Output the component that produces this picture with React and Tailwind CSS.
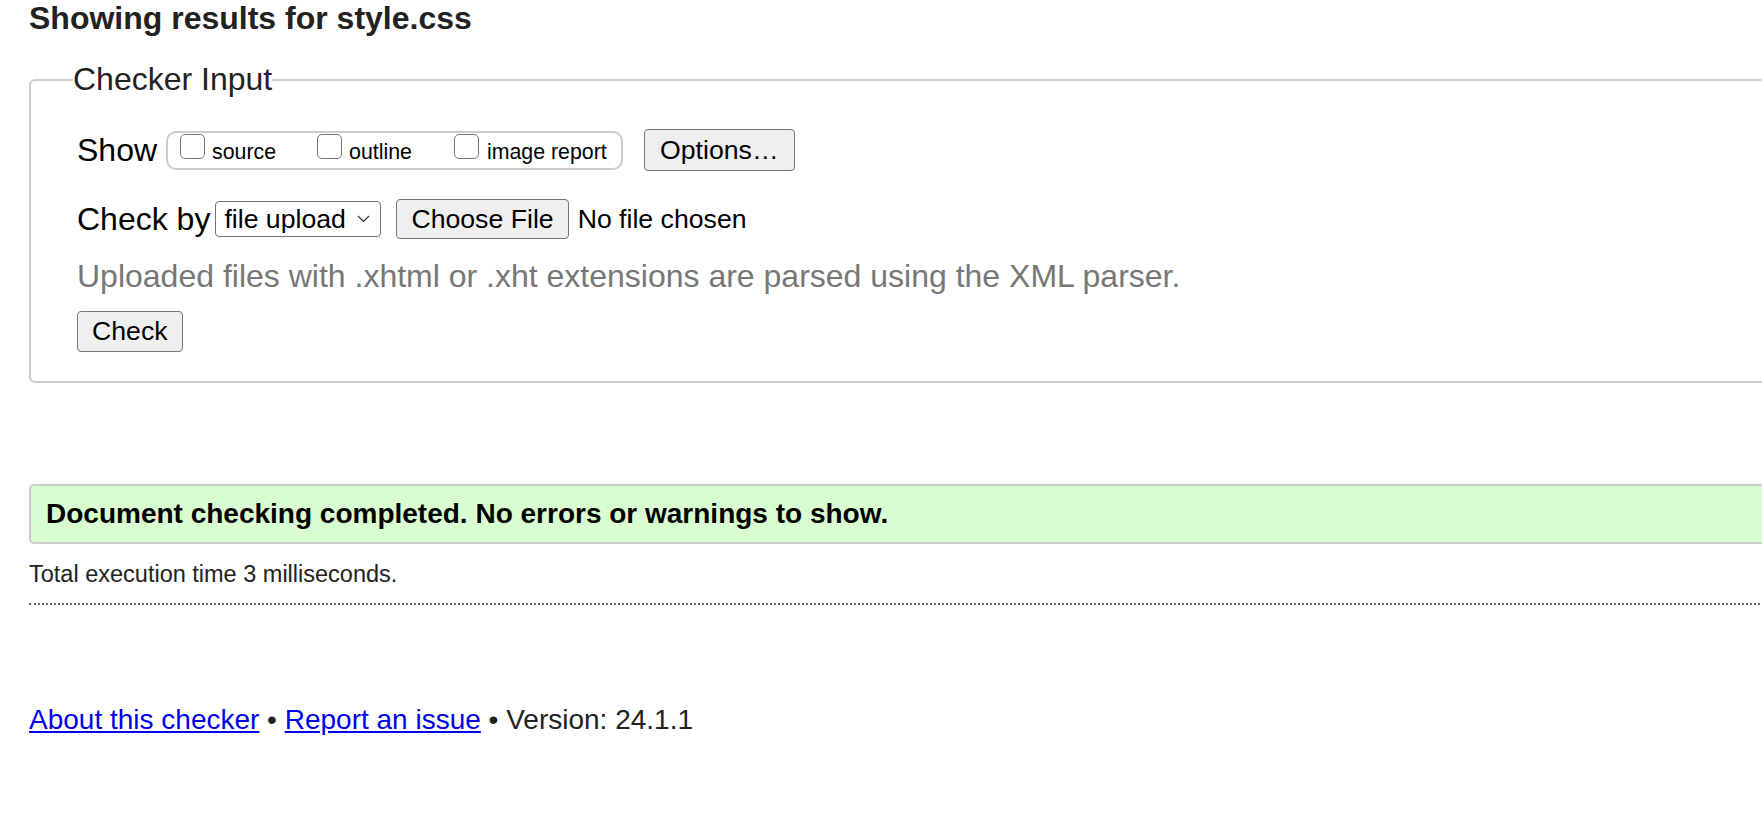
import React from "react";

const font = { fontFamily: '"Liberation Sans", Arial, sans-serif' };

function Checkbox() {
  return (
    <span className="inline-block h-[25px] w-[25px] shrink-0 rounded-[5px] border-[1.5px] border-[#767676] bg-white" />
  );
}

function Button({ children, className = "" }) {
  return (
    <span
      className={
        "inline-flex items-center rounded-[4px] border-[1.5px] border-[#767676] bg-[#efefef] px-[14px] py-[4px] text-[26.67px] leading-[31px] text-black " +
        className
      }
    >
      {children}
    </span>
  );
}

export default function App() {
  return (
    <div className="min-h-screen w-full overflow-hidden bg-white text-[#222]" style={font}>
      <div className="w-[1900px] pl-[29px]">
        <h2 className="text-[32px] font-bold leading-[37px] text-[#222]">Showing results for style.css</h2>

        <fieldset className="mt-[24px] rounded-[6px] border-2 border-[#cccccc] pl-[42px] pt-[31px] pb-[29px]">
          <legend className="text-[32px] leading-[37px] text-[#222]">Checker Input</legend>

          <div className="ml-[4px] flex h-[42px] items-center">
            <span className="text-[32px] leading-[37px] text-black">Show</span>
            <div className="ml-[9px] flex h-[39px] w-[457px] items-start rounded-[10px] border-2 border-[#cccccc] pl-[12px] pt-[1px]">
              <Checkbox />
              <span className="ml-[7px] mt-[6px] text-[21.33px] leading-[25px] text-black">source</span>
              <span className="ml-[41px]"><Checkbox /></span>
              <span className="ml-[7px] mt-[6px] text-[21.33px] leading-[25px] text-black">outline</span>
              <span className="ml-[42px]"><Checkbox /></span>
              <span className="ml-[8px] mt-[6px] text-[21.33px] leading-[25px] text-black">image report</span>
            </div>
            <Button className="ml-[21px] h-[42px] px-[15px]">Options…</Button>
          </div>

          <div className="ml-[4px] mt-[28px] flex h-[40px] items-center">
            <span className="text-[32px] leading-[37px] text-black">Check by</span>
            <span className="ml-[5px] inline-flex h-[36px] w-[166px] items-center rounded-[4px] border-[1.5px] border-[#767676] bg-white pl-[8px] text-[26.67px] leading-[31px] text-black">
              file upload
              <svg className="ml-[11px]" width="13" height="8" viewBox="0 0 13 8" fill="none">
                <path d="M1 1 L6.5 6.5 L12 1" stroke="#333" strokeWidth="1.2" />
              </svg>
            </span>
            <Button className="ml-[15px] h-[40px] px-[14px]">Choose File</Button>
            <span className="ml-[9px] text-[26.67px] leading-[31px] text-black">No file chosen</span>
          </div>

          <p className="ml-[4px] mt-[19px] text-[32px] leading-[37px] text-[#777777]">
            Uploaded files with .xhtml or .xht extensions are parsed using the XML parser.
          </p>

          <div className="ml-[4px] mt-[16px] flex">
            <Button className="h-[41px]">Check</Button>
          </div>
        </fieldset>

        <div className="mt-[101px] flex h-[60px] items-center rounded-[5px] border-2 border-[#cccccc] bg-[#d8fdd0] pl-[15px]">
          <span className="text-[28px] font-bold leading-[32px] text-black">
            Document checking completed. No errors or warnings to show.
          </span>
        </div>

        <p className="mt-[17px] text-[23.5px] leading-[27px] text-[#222]">Total execution time 3 milliseconds.</p>

        <div className="mt-[15px] border-t-2 border-dotted border-[#666666]" />

        <p className="mt-[99px] text-[28px] leading-[32px] text-[#222]">
          <a href="#" className="text-[#0000ee] underline">About this checker</a>
          {" • "}
          <a href="#" className="text-[#0000ee] underline">Report an issue</a>
          {" • Version: 24.1.1"}
        </p>
      </div>
    </div>
  );
}
